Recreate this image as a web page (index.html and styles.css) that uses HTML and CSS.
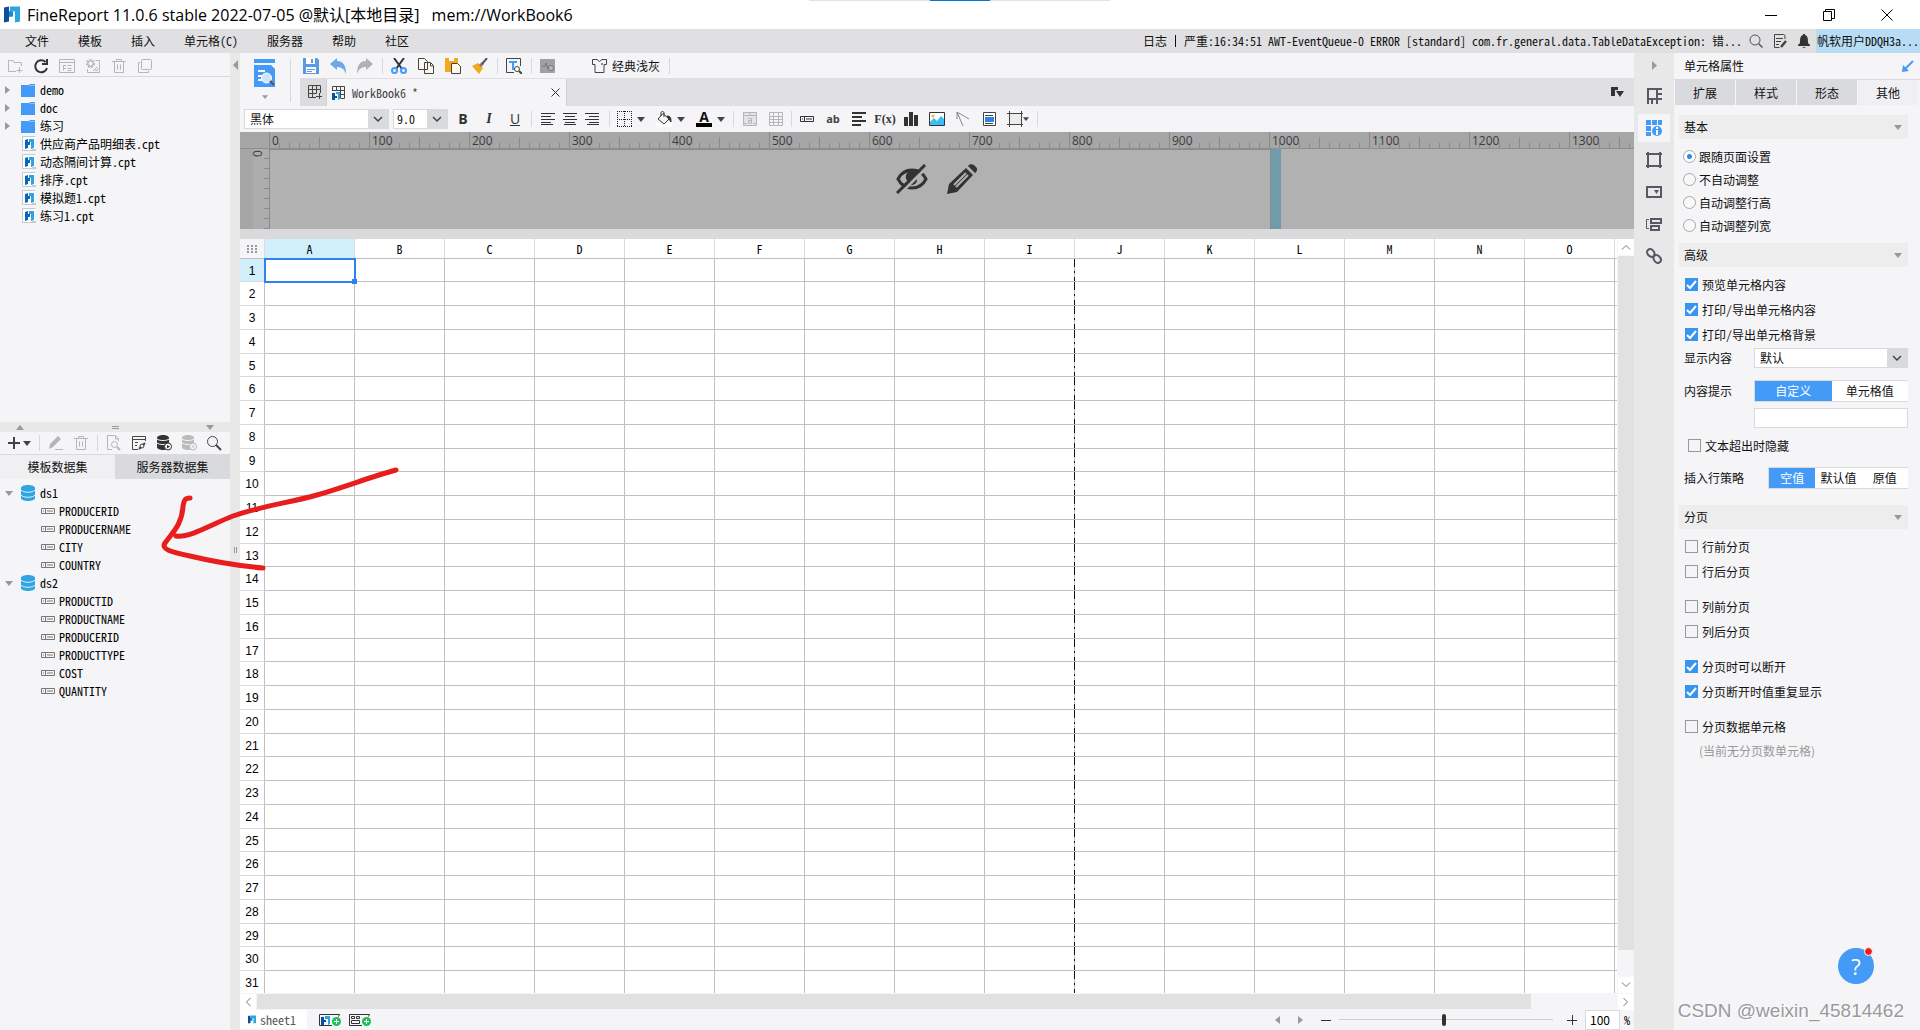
FILE: index.html
```html
<!DOCTYPE html>
<html lang="zh-CN">
<head>
<meta charset="utf-8">
<title>FineReport</title>
<link rel="stylesheet" href="styles.css">
</head>
<body>
<svg class="defs" aria-hidden="true">
  <symbol id="logo" viewBox="0 0 16 16"><path fill="#0a4f9e" d="M0 1l5-1v5h3v5H5v5l-5 1z"/><path fill="#2aa5e0" d="M6 0h10v15l-5 1V5H6z"/><path fill="#1a86d0" d="M5 5h4v5H5z"/></symbol>
  <symbol id="folder" viewBox="0 0 14 13"><path fill="#439bf7" d="M0 1h8l1-1h5v13H0z"/><path stroke="#8cc3fb" fill="none" d="M8 2.500l1-1h5"/></symbol>
  <symbol id="cpt" viewBox="0 0 14 16"><path fill="#fff" stroke="#c8c9cc" d="M13 .5H.5v14H13"/><path fill="#0a65bd" d="M3 4l3-1v3h2v3H6v3l-3 1z"/><path fill="#2aa5e0" d="M7 3h5v9l-3 1V6H7z"/><path fill="#c8c9cc" d="M10 13h4v2h-4z"/></symbol>
  <symbol id="db" viewBox="0 0 14 16"><path fill="#2fa5e2" d="M0 3c0-4 14-4 14 0v10c0 4-14 4-14 0z"/><path fill="none" stroke="#e4f3fc" d="M0 5c2 3 12 3 14 0M0 10c2 3 12 3 14 0"/></symbol>
  <symbol id="field" viewBox="0 0 14 6"><path fill="none" stroke="#777" d="M.5 .5h13v5H.5zM4.500 0v6M6 3h6M2 3h1"/></symbol>
  <symbol id="down" viewBox="0 0 8 5"><path fill="currentColor" d="M0 0h8L4 5z"/></symbol>
  <symbol id="right" viewBox="0 0 5 8"><path fill="currentColor" d="M0 0l5 4-5 4z"/></symbol>
  <symbol id="left" viewBox="0 0 5 8"><path fill="currentColor" d="M5 0L0 4l5 4z"/></symbol>
  <symbol id="trash" viewBox="0 0 16 16"><path fill="none" stroke="currentColor" d="M1 3.500h14M5.500 3V1.500h5V3M3.500 4v10.500h9V4M6.500 6.500v5M9.500 6.500v5"/></symbol>
</svg>

<header class="title-bar">
  <svg class="app-logo"><use href="#logo"/></svg>
  <h1>FineReport 11.0.6 stable 2022-07-05 @默认[本地目录]<span class="book-path">mem://WorkBook6</span></h1>
  <div class="window-buttons">
    <button aria-label="最小化"><svg width="12" height="12"><path d="M0 6.500h12"/></svg></button>
    <button aria-label="还原"><svg width="12" height="12"><path d="M.5 2.500h8v9h-8zM2.500 2V.5h9v9H9"/></svg></button>
    <button aria-label="关闭"><svg width="12" height="12"><path d="M.5 .5l11 11M11.500 .5l-11 11"/></svg></button>
  </div>
  <div class="pull-bar"><span></span></div>
</header>

<nav class="menu-bar">
  <div class="menus">
    <button>文件</button><button>模板</button><button>插入</button><button>单元格<span class="m">(C)</span></button><button>服务器</button><button>帮助</button><button>社区</button>
  </div>
  <div class="log"><span>日志</span><i></i><span>严重<span class="m">:16:34:51 AWT-EventQueue-0 ERROR [standard] com.fr.general.data.TableDataException: </span>错<span class="m">...</span></span></div>
  <div class="menu-icons">
    <button aria-label="搜索"><svg width="14" height="14" fill="none" stroke="#555"><circle cx="6" cy="6" r="5"/><path d="M9.500 9.500l4 4" stroke-width="1.500"/></svg></button>
    <button aria-label="编辑"><svg width="14" height="14" fill="none" stroke="#444"><path d="M12 5V1.500L10.500 .5h-9v13h5M3 4.500h7M3 7.500h5M3 10.500h3" /><path d="M8 13l5-6" stroke-width="2.500"/></svg></button>
    <button aria-label="通知"><svg width="14" height="14"><path fill="#333" d="M6 0h2v1c3 1 3 4 3 8l2 2v1H1v-1l2-2c0-4 0-7 3-8zM5 13h4l-2 1z"/></svg></button>
  </div>
  <button class="user">帆软用户<span class="m">DDQH3a...</span></button>
</nav>

<main class="workspace">
  <aside class="left-panel">
    <div class="toolbar tree-tools">
      <button aria-label="新建文件夹" class="dim"><svg><path d="M9 13.500H1.500v-11H6l1 2h7.500V8M12.500 9v6M9.500 12.500h6"/></svg></button>
      <button aria-label="刷新"><svg><path stroke="#333" stroke-width="2" d="M12.500 4a6 6 0 1 0 1.500 6M14 1v5H9"/></svg></button>
      <button aria-label="查看" class="dim"><svg><path d="M.5 1.500h15v13H.5zM.5 4.500h15M4.500 7v5.500M4.500 7.500H7M4.500 10.500H7M8.500 7.500h4M8.500 10.500h4M8.500 12.500h4"/></svg></button>
      <button aria-label="设置" class="dim"><svg><circle cx="5.500" cy="5.500" r="2.500"/><path stroke-dasharray="2 1" stroke-width="2" d="M9 5.500a3.500 3.500 0 1 1-7 0 3.500 3.500 0 1 1 7 0"/><path d="M10.500 2.500h4v12h-12V11M8 13l4-4M12.500 10v2.500H10"/></svg></button>
      <button aria-label="删除" class="dim"><svg><use href="#trash"/></svg></button>
      <button aria-label="复制" class="dim"><svg><rect x="4.500" y="1.500" width="10" height="10" rx="1"/><path d="M3 4.500H1.500v10h10V13"/></svg></button>
    </div>
    <ul class="tree files">
      <li><svg class="tw r"><use href="#right"/></svg><svg class="ti"><use href="#folder"/></svg><span class="m">demo</span></li>
      <li><svg class="tw r"><use href="#right"/></svg><svg class="ti"><use href="#folder"/></svg><span class="m">doc</span></li>
      <li><svg class="tw r"><use href="#right"/></svg><svg class="ti"><use href="#folder"/></svg>练习</li>
      <li><svg class="ti leaf"><use href="#cpt"/></svg>供应商产品明细表<span class="m">.cpt</span></li>
      <li><svg class="ti leaf"><use href="#cpt"/></svg>动态隔间计算<span class="m">.cpt</span></li>
      <li><svg class="ti leaf"><use href="#cpt"/></svg>排序<span class="m">.cpt</span></li>
      <li><svg class="ti leaf"><use href="#cpt"/></svg>模拟题<span class="m">1.cpt</span></li>
      <li><svg class="ti leaf"><use href="#cpt"/></svg>练习<span class="m">1.cpt</span></li>
    </ul>
    <div class="h-split"><svg class="up" width="8" height="5"><path fill="#999" d="M0 5h8L4 0z"/></svg><i></i><svg class="dn" width="8" height="5"><use href="#down"/></svg></div>
    <div class="toolbar data-tools">
      <button class="add" aria-label="添加"><svg width="12" height="12"><path stroke="#444" stroke-width="2" d="M6 0v12M0 6h12"/></svg><svg class="caret"><use href="#down"/></svg></button>
      <i class="sep"></i>
      <button aria-label="编辑" class="dim"><svg><path fill="currentColor" stroke="none" d="M1 14l1-5 8-8 3 3-8 8zM7 14h8v1H7z"/></svg></button>
      <button aria-label="删除" class="dim"><svg><use href="#trash"/></svg></button>
      <i class="sep"></i>
      <button aria-label="预览" class="dim"><svg><path d="M6 14.500H1.500V.5h8l3 3V6M9.500 1v3h3"/><circle cx="8.500" cy="9.500" r="3"/><path d="M11 12l3 3" stroke-width="2"/></svg></button>
      <button aria-label="关联"><svg stroke="#444"><path d="M14.500 6V1.500h-13v13H7M1 4.500h13M4 7.500h3M4 10.500h2" /><path stroke-width="2" d="M8 14l2-2M14 8l-2 2"/><circle cx="11" cy="11" r="2"/></svg></button>
      <button aria-label="连接"><svg><path fill="#333" stroke="none" d="M1 3c0-4 12-4 12 0v9c0 4-12 4-12 0z"/><path stroke="#f5f5f7" d="M1 4c2 2 10 2 12 0M1 8c2 2 10 2 12 0"/><circle cx="12" cy="11.500" r="3.500" fill="#f5f5f7" stroke="#333"/><path fill="#333" stroke="none" d="M11 10l3 1.500-3 2z"/></svg></button>
      <button aria-label="断开" class="dim"><svg><path fill="#bbb" stroke="none" d="M1 3c0-4 12-4 12 0v9c0 4-12 4-12 0z"/><path stroke="#f5f5f7" d="M1 4c2 2 10 2 12 0M1 8c2 2 10 2 12 0"/><circle cx="12" cy="11.500" r="3.500" fill="#f5f5f7"/><path d="M11 10.500l2 2M13 10.500l-2 2"/></svg></button>
      <button aria-label="搜索"><svg stroke="#444"><circle cx="6.500" cy="6.500" r="5"/><path stroke-width="2" d="M10 10l5 5"/></svg></button>
    </div>
    <div class="data-tabs"><button class="on">模板数据集</button><button>服务器数据集</button></div>
    <ul class="tree data">
      <li class="ds"><svg class="tw d"><use href="#down"/></svg><svg class="ti db"><use href="#db"/></svg><span class="m">ds1</span></li>
      <li class="f"><svg><use href="#field"/></svg><span class="m">PRODUCERID</span></li>
      <li class="f"><svg><use href="#field"/></svg><span class="m">PRODUCERNAME</span></li>
      <li class="f"><svg><use href="#field"/></svg><span class="m">CITY</span></li>
      <li class="f"><svg><use href="#field"/></svg><span class="m">COUNTRY</span></li>
      <li class="ds"><svg class="tw d"><use href="#down"/></svg><svg class="ti db"><use href="#db"/></svg><span class="m">ds2</span></li>
      <li class="f"><svg><use href="#field"/></svg><span class="m">PRODUCTID</span></li>
      <li class="f"><svg><use href="#field"/></svg><span class="m">PRODUCTNAME</span></li>
      <li class="f"><svg><use href="#field"/></svg><span class="m">PRODUCERID</span></li>
      <li class="f"><svg><use href="#field"/></svg><span class="m">PRODUCTTYPE</span></li>
      <li class="f"><svg><use href="#field"/></svg><span class="m">COST</span></li>
      <li class="f"><svg><use href="#field"/></svg><span class="m">QUANTITY</span></li>
    </ul>
  </aside>

  <div class="v-split"><svg width="5" height="10" viewBox="0 0 5 8" preserveAspectRatio="none"><use href="#left"/></svg><i></i></div>

  <section class="center">
    <div class="top">
      <button class="preview" aria-label="预览">
        <svg width="22" height="28"><path fill="#439bf7" d="M0 0h21v4H0zM0 6h17l4 4v18H0z"/><path stroke="#fff" stroke-width="2" d="M4 12h7M4 17h4M4 21h4"/><circle cx="12.500" cy="19" r="5" fill="#cfe5fb" stroke="#fff"/><path stroke="#555" stroke-width="2" d="M16 22l4 4"/></svg>
        <svg class="caret"><use href="#down"/></svg>
      </button>
      <div class="top-right">
        <div class="toolbar main-tools">
          <button aria-label="保存"><svg stroke="none"><path fill="#5a9ae0" d="M0 0h14l2 2v14H0z"/><path fill="#fff" d="M3 0h9v6H3zM3 9h10v6H3z"/><path fill="#5a9ae0" d="M8 1h2v4H8zM4 11h8v1H4zM4 13h5v1H4z"/></svg></button>
          <button aria-label="撤销"><svg stroke="none"><path fill="#6ea8ea" d="M0 6l7-6v3c6 0 9 4 9 13-2-5-4-7-9-7v3z"/></svg></button>
          <button aria-label="重做"><svg stroke="none"><path fill="#b0b1b4" d="M16 6L9 0v3C3 3 0 7 0 16c2-5 4-7 9-7v3z"/></svg></button>
          <i class="sep"></i>
          <button aria-label="剪切"><svg><path stroke="#333" stroke-width="2" d="M3 0l8 11M13 0L5 11"/><circle cx="3.500" cy="12.500" r="2.500" stroke="#439bf7" stroke-width="2"/><circle cx="12.500" cy="12.500" r="2.500" stroke="#439bf7" stroke-width="2"/></svg></button>
          <button aria-label="复制"><svg stroke="#444"><path fill="#fff8ea" d="M.5 .5h6l3 3v8h-9zM6.500 4.500h6l3 3v8h-9z"/><path d="M12.500 5v3h3"/></svg></button>
          <button aria-label="粘贴"><svg stroke="none"><path fill="#f5a81c" d="M0 0h13v5H6v9H0z"/><path fill="#fff" d="M4 0h5v3H4z"/><path fill="#fff8ea" stroke="#444" d="M6.500 5.500h6l3 3v7h-9z"/></svg></button>
          <button aria-label="格式刷"><svg stroke="none"><path fill="#f5a81c" d="M0 8l6-3 5 5-4 6z"/><path stroke="#777" stroke-width="3" d="M8 8l3-3"/><path stroke="#555" stroke-width="2" d="M10 6l5-6"/></svg></button>
          <i class="sep"></i>
          <button aria-label="查找"><svg stroke="#444"><path d="M8 14.500H.5V.5h14V8"/><path stroke="#439bf7" stroke-width="2" d="M3 4h8M7 4v8"/><circle cx="11" cy="11" r="2.500" fill="#fff"/><path stroke-width="2" d="M13 13l3 3"/></svg></button>
          <i class="sep"></i>
          <button aria-label="监控"><svg stroke="none"><path fill="#a0a1a3" d="M0 1h15v14H0z"/><path stroke="#77787a" fill="none" d="M2 8h3l1-3 2 6 1-3"/><circle cx="11" cy="10" r="2.500" stroke="#77787a" fill="#bbb"/></svg></button>
          <button class="theme"><svg stroke="#444"><path d="M1 1.500h4l2.500 2 2.500-2h4.500v5H12v8H3V6.500H.5v-5z"/><path fill="#439bf7" stroke="none" d="M9 5h2v2H9z"/></svg>经典浅灰</button>
          <i class="sep"></i>
        </div>
        <div class="book-tabs">
          <button class="new-tab" aria-label="新建模板"><svg width="15" height="15"><path stroke="#444" fill="none" d="M8 12.500H.5V.5h12V8M.5 4.500h12M.5 8.500h8M4.500 .5v12M8.500 .5v8M11.500 8v6M8 11.500h6"/></svg></button>
          <div class="book-tab"><svg width="14" height="14"><path stroke="#444" fill="none" d="M.5 5V.5h12v12H9M.5 4.500h12M9 8.500h4M4.500 .5v4M8.500 .5v12"/><path fill="#f5f5f7" d="M0 6h8v8H0z"/><path fill="#0a4f9e" d="M0 7h3v3h2v2H3v2H0z"/><path fill="#2aa5e0" d="M4 6h4v7l-2 1V8H4z"/></svg><span class="m">WorkBook6 *</span><button aria-label="关闭标签"><svg width="9" height="9"><path stroke="#333" d="M.5 .5l8 8M8.500 .5l-8 8"/></svg></button></div>
          <button class="tab-list" aria-label="标签列表"><svg width="13" height="11"><path fill="#333" d="M0 0h7v3H4v6H0zM5 4h8L9 10z"/></svg></button>
        </div>
      </div>
    </div>

    <div class="toolbar format">
      <select class="font-name" aria-label="字体"><option>黑体</option></select>
      <select class="font-size m" aria-label="字号"><option>9.0</option></select>
      <div class="letters"><button><b>B</b></button><button><em>I</em></button><button><u>U</u></button></div>
      <i class="sep"></i>
      <div class="grp aligns">
        <button aria-label="左对齐"><svg stroke="#333"><path d="M1 2.500h14M1 5.500h10M1 8.500h14M1 11.500h10M1 13.500h12"/></svg></button>
        <button aria-label="居中"><svg stroke="#333"><path d="M1 2.500h14M3 5.500h10M1 8.500h14M3 11.500h10M2 13.500h12"/></svg></button>
        <button aria-label="右对齐"><svg stroke="#333"><path d="M1 2.500h14M5 5.500h10M1 8.500h14M5 11.500h10M3 13.500h12"/></svg></button>
      </div>
      <i class="sep"></i>
      <div class="grp drops">
        <button aria-label="边框"><svg stroke="#222" stroke-dasharray="1 1"><path d="M1 .5h15M1 15.500h15M1.500 0v16M15.500 0v16M1 8.500h15M8.500 0v16"/></svg><svg class="caret"><use href="#down"/></svg></button>
        <button aria-label="填充"><svg stroke="#333"><path fill="#fff" stroke="none" d="M0 12h16v4H0z"/><path d="M7 2.500L13 8l-5 5-6-5z"/><path d="M5 5V2c0-2 3-2 3 0v4"/><path fill="#333" d="M11 5c3 0 4 1 4 6l-2-3z"/></svg><svg class="caret"><use href="#down"/></svg></button>
        <button aria-label="字体颜色" class="fc"><span class="fc-box"><b>A</b></span><svg class="caret"><use href="#down"/></svg></button>
      </div>
      <i class="sep"></i>
      <div class="grp cells">
        <button aria-label="合并" class="dim"><svg><path fill="#e4e4e6" d="M1.500 1.500h13v13h-13z"/><path d="M1 4.500h14M8 1v3M6 7.500h3.500v5M9 9.500H6.500v2.500H9M2 12.500h3M11 12.500h4"/></svg></button>
        <button aria-label="拆分" class="dim"><svg><path d="M1.500 1.500h13v13h-13zM1 5.500h14M1 8.500h14M1 11.500h14M5.500 1v14M10.500 1v14"/></svg></button>
      </div>
      <i class="sep"></i>
      <div class="grp inserts">
        <button aria-label="数据列"><svg stroke="#333"><path d="M1.500 5.500h13v5h-13zM5.500 5v6M7 8h6M3 8h1"/></svg></button>
        <button class="ab">ab</button>
        <button aria-label="富文本"><svg stroke="#333" stroke-width="2"><path d="M1 2h14M1 6h10M1 10h14M1 14h9"/></svg></button>
        <button class="fx">F(x)</button>
        <button aria-label="图表"><svg stroke="none"><path fill="#333" d="M1 6h4v9H1zM6 1h4v14H6zM11 4h4v11h-4z"/></svg></button>
        <button aria-label="图片"><svg><path fill="#fff" stroke="#333" d="M.5 1.500h15v13H.5z"/><circle cx="4" cy="5" r="1.500" fill="#f7b733" stroke="none"/><path fill="#3bbdf5" stroke="none" d="M1 11l4-4 3 3 4-5 3 3v6H1z"/></svg></button>
        <button aria-label="斜线"><svg stroke="#888"><path d="M2 1l12 7M2 1l6 14M2 1v7"/></svg></button>
        <button aria-label="子报表"><svg stroke="#444"><path fill="#fff" d="M2.500 1.500h12v13h-12z"/><path d="M4 4.500h8M4 12.500h8"/><path fill="#2e87df" stroke="none" d="M4 6h9v5H4z"/></svg></button>
        <button aria-label="悬浮元素"><svg stroke="#444"><path fill="#ececee" d="M2.500 2.500h12v11h-12z"/><path d="M0 2.500h16M0 13.500h16M2.500 0v16M14.500 0v16"/></svg></button>
      </div>
      <svg class="caret small"><use href="#down"/></svg>
      <i class="sep"></i>
    </div>

    <div class="canvas">
      <div class="ruler-x"><span class="zero"></span></div>
      <div class="canvas-body">
        <div class="ruler-y"><span>0</span></div>
        <div class="form-page">
          <svg width="32" height="30" viewBox="0 0 32 30"><path fill="none" stroke="#333" stroke-width="3" d="M2 15c6-12 22-12 28 0-6 12-22 12-28 0z"/><path fill="#333" d="M3 13C8 5 20 4 24 7L10 22l-5-3c3 1 5 1 7-1-3-3-3-7 0-10z"/><path fill="#333" d="M20 13c3 4-1 9-6 8z"/><path stroke="#b1b1b1" stroke-width="3" d="M4 30L31 3"/><path stroke="#333" stroke-width="3" d="M1 29L29 1"/></svg>
          <svg width="30" height="30" viewBox="0 0 30 30"><path fill="#333" d="M0 30l2-10L19 4l7 7L10 28zM21 2c2-3 6-2 8 1 2 2 1 5-1 6z"/><path stroke="#b1b1b1" stroke-width="2" d="M7 21L19 9M9 23L21 11"/></svg>
        </div>
        <div class="edge"></div>
      </div>
    </div>

    <div class="sheet">
      <div class="grid-clip"><table class="grid"></table></div>
      <div class="scroll-y"><button aria-label="向上"><svg width="10" height="6"><path d="M1 5.500l4-4 4 4"/></svg></button><i></i><button aria-label="向下"><svg width="10" height="6"><path d="M1 .5l4 4 4-4"/></svg></button></div>
    </div>
    <div class="scroll-x"><button aria-label="向左"><svg width="6" height="10"><path d="M5.500 1l-4 4 4 4"/></svg></button><i></i><button aria-label="向右"><svg width="6" height="10"><path d="M.5 1l4 4-4 4"/></svg></button></div>

    <footer class="status">
      <button class="sheet-tab"><svg width="8" height="9"><use href="#logo"/></svg><span class="m">sheet1</span></button>
      <button class="add-sheet" aria-label="新增报表"><svg width="23" height="14"><path fill="none" stroke="#333" d="M13 12.500H.5V1.500h20l-1 2"/><path fill="#0a4f9e" d="M2 4h3v3h2v2H5v3H2z"/><path fill="#2aa5e0" d="M6 3h5v8l-2 1V6H6z"/><circle cx="17.500" cy="8.500" r="4.500" fill="#21bf5b"/><path stroke="#fff" d="M15 8.500h5M17.500 6v5"/></svg></button>
      <button class="add-sheet" aria-label="新增决策报表"><svg width="23" height="14"><path fill="none" stroke="#333" d="M13 12.500H.5V1.500h20l-1 2M2.500 3.500h3v2h-3zM7.500 3.500h3v2h-3zM2.500 7.500h8v3h-8z"/><circle cx="17.500" cy="8.500" r="4.500" fill="#21bf5b"/><path stroke="#fff" d="M15 8.500h5M17.500 6v5"/></svg></button>
      <div class="zoom">
        <svg width="5" height="8"><use href="#left"/></svg>
        <svg width="5" height="8"><use href="#right"/></svg>
        <button aria-label="缩小"><svg width="10" height="10"><path stroke="#333" d="M0 5.500h10"/></svg></button>
        <input type="range" min="0" max="100" value="49" aria-label="缩放">
        <button aria-label="放大"><svg width="10" height="10"><path stroke="#333" d="M0 5.500h10M5.500 0v10"/></svg></button>
        <label><input type="text" value="100"><span class="m">%</span></label>
      </div>
    </footer>
  </section>

  <nav class="rail">
    <button class="fold" aria-label="折叠"><svg width="5" height="9" viewBox="0 0 5 8" preserveAspectRatio="none"><use href="#right"/></svg></button>
    <button aria-label="单元格元素"><svg><path d="M1 1h15M2 1v15M2 11h9M11 1v15M11 6h5M11 11h5M6 11v5"/></svg></button>
    <button class="on" aria-label="单元格属性"><svg stroke="none"><path fill="#439bf7" d="M0 0h5v5H0zM6 0h5v5H6zM12 0h4v5h-4zM0 6h5v5H0zM0 12h5v4H0z"/><circle cx="11" cy="11" r="5" fill="#439bf7"/><path fill="#fff" d="M10 7h2v2h-2zM10 10h2v5h-2z"/></svg></button>
    <button aria-label="悬浮元素"><svg><path d="M2 0v16M14 0v16M0 2h16M0 14h16"/></svg></button>
    <button aria-label="控件设置"><svg><path d="M1 3h14v10H1z"/><path fill="#555962" stroke="none" d="M8 6h5l-2.500 4z"/></svg></button>
    <button aria-label="条件属性"><svg><path d="M5 3h10v4H5zM5 10h8v4H5z"/><path stroke-width="1" d="M3 3.500H.5v9H3"/></svg></button>
    <button aria-label="超级链接"><svg><path d="M9 8C4 11-1 5 2 2s8 2 6 6M7 8c5-3 10 3 7 6s-8-2-6-6"/></svg></button>
  </nav>

  <aside class="props">
    <header><h2>单元格属性</h2><svg width="12" height="12"><path stroke="#439bf7" stroke-width="2" d="M11 1L3 9"/><path fill="#439bf7" d="M0 12l1-7 6 6z"/></svg></header>
    <div class="prop-tabs"><button>扩展</button><button>样式</button><button>形态</button><button class="on">其他</button></div>
    <div class="prop-body">
      <h3>基本<svg class="caret"><use href="#down"/></svg></h3>
      <div class="radios">
        <label><input type="radio" name="fit" checked>跟随页面设置</label>
        <label><input type="radio" name="fit">不自动调整</label>
        <label><input type="radio" name="fit">自动调整行高</label>
        <label><input type="radio" name="fit">自动调整列宽</label>
      </div>
      <h3>高级<svg class="caret"><use href="#down"/></svg></h3>
      <div class="checks">
        <label><input type="checkbox" checked>预览单元格内容</label>
        <label><input type="checkbox" checked><span>打印<span class="m">/</span>导出单元格内容</span></label>
        <label><input type="checkbox" checked><span>打印<span class="m">/</span>导出单元格背景</span></label>
      </div>
      <div class="row"><label for="show">显示内容</label><select id="show"><option>默认</option></select></div>
      <div class="row tip"><span>内容提示</span><div class="seg two"><button class="on">自定义</button><button>单元格值</button></div></div>
      <input class="tip-text" type="text" aria-label="内容提示">
      <div class="checks inset"><label><input type="checkbox">文本超出时隐藏</label></div>
      <div class="row insert"><span>插入行策略</span><div class="seg three"><button class="on">空值</button><button>默认值</button><button>原值</button></div></div>
      <h3>分页<svg class="caret"><use href="#down"/></svg></h3>
      <div class="checks">
        <label><input type="checkbox">行前分页</label>
        <label><input type="checkbox">行后分页</label>
      </div>
      <div class="checks later">
        <label><input type="checkbox">列前分页</label>
        <label><input type="checkbox">列后分页</label>
      </div>
      <div class="checks later">
        <label><input type="checkbox" checked>分页时可以断开</label>
        <label><input type="checkbox" checked>分页断开时值重复显示</label>
      </div>
      <div class="checks later">
        <label><input type="checkbox">分页数据单元格</label>
        <p>(当前无分页数单元格)</p>
      </div>
    </div>
  </aside>
</main>

<svg class="marker" width="280" height="120" viewBox="150 460 280 120"><path d="M396 470C370 477 345 487 317 495S265 505 233 516C212 524 190 538 176 536M190 498C185 498 184 500 183 506C182 525 172 533 165 543C161 549 170 552 190 556C215 562 240 566 263 568"/></svg>
<button class="help">?<i></i></button>
<div class="watermark">CSDN @weixin_45814462</div>
<script src="script.js"></script>
</body>
</html>
```
FILE: styles.css
```css
* { box-sizing: border-box; }
body {
  margin: 0;
  height: 100vh;
  display: flex;
  flex-direction: column;
  overflow: hidden;
  background: #f5f5f7;
  color: #111;
  font: 12px/16px "Noto Sans CJK SC", sans-serif;
}
.m { font-family: "Noto Sans Mono CJK SC", "Liberation Mono", monospace; white-space: pre; }
button, input, select { font: inherit; color: inherit; margin: 0; padding: 0; border: 0; background: none; }
h1, h2, h3, ul, p { margin: 0; padding: 0; font-weight: normal; font-size: inherit; list-style: none; }
svg { display: block; flex: none; }
.defs { width: 0; height: 0; position: absolute; }
.sep { width: 1px; height: 16px; background: #d8d8db; flex: none; }
.toolbar { display: flex; align-items: center; }
.toolbar button { display: flex; align-items: center; justify-content: center; flex: none; }
.toolbar button > svg { width: 16px; height: 16px; fill: none; }
.toolbar svg:not([stroke]) { stroke: currentColor; }
.dim { color: #b5b6b9; }
svg.caret, .toolbar button > svg.caret { width: 8px; height: 5px; color: #444; stroke: none; }

/* title and menus */
.title-bar { flex: none; height: 29px; background: #fff; display: flex; align-items: center; padding: 0 4px; position: relative; color: #000; }
.app-logo { width: 16px; height: 17px; }
.title-bar h1 { font: 16px/24px "Open Sans", "Noto Sans CJK SC", sans-serif; margin-left: 7px; flex: 1; }
.book-path { margin-left: 12px; }
.window-buttons { display: flex; }
.window-buttons button { width: 58px; height: 28px; display: grid; place-items: center; }
.window-buttons svg { fill: none; stroke: #000; }
.pull-bar { position: absolute; top: 0; left: 809px; width: 301px; height: 1px; background: #e2e2e2; display: flex; justify-content: center; }
.pull-bar span { width: 60px; background: #0078d7; }
.menu-bar { flex: none; height: 24px; background: #e0e0e2; display: flex; align-items: center; }
.menus { display: flex; gap: 29px; padding-left: 25px; flex: 1; }
.log { display: flex; align-items: center; gap: 8px; white-space: nowrap; }
.log i { width: 1px; height: 12px; background: #111; }
.menu-icons { display: flex; gap: 10px; padding: 0 5px 0 7px; }
.user { width: 104px; height: 24px; background: #b8dcf3; white-space: nowrap; }

.workspace { flex: 1; min-height: 0; display: flex; }

/* left panel */
.left-panel { width: 230px; display: flex; flex-direction: column; flex: none; }
.tree-tools { height: 24px; flex: none; gap: 10px; padding: 2px 0 0 7px; border-bottom: 1px solid #dadadc; }
.tree li { height: 18px; display: flex; align-items: center; padding-left: 5px; color: #000; }
.tree .tw { width: 5px; height: 8px; color: #999; margin-right: 11px; }
.tree .ti { width: 14px; height: 13px; margin-right: 5px; }
.tree .ti.leaf { height: 16px; margin-left: 17px; margin-right: 4px; }
.files { height: 345px; padding-top: 4px; }
.data { padding-top: 5px; flex: 1; }
.tree .tw.d { width: 8px; height: 5px; margin-right: 8px; }
.tree .ti.db { height: 16px; margin-right: 5px; }
.tree .f { padding-left: 41px; gap: 4px; }
.tree .f svg { width: 14px; height: 6px; }
.h-split { flex: none; height: 10px; background: #e8e8e9; display: flex; align-items: center; justify-content: space-between; padding: 0 16px; color: #999; }
.h-split i { width: 7px; height: 3px; border: solid #999; border-width: 1px 0; }
.data-tools { flex: none; height: 23px; gap: 9px; padding-left: 8px; border-bottom: 1px solid #dadadc; }
.data-tools .add { gap: 3px; width: 23px; }
.toolbar.data-tools .add svg:first-child { width: 12px; height: 12px; }
.data-tools .sep { margin: 0 -1px; }
.data-tabs { flex: none; height: 24px; display: flex; }
.data-tabs button { flex: 1; background: #d9dadd; }
.data-tabs .on { background: #f0f0f2; }
.v-split { width: 10px; flex: none; background: #e8e8e9; display: flex; flex-direction: column; align-items: center; padding-top: 7px; color: #999; }
.v-split i { width: 3px; height: 6px; border: solid #999; border-width: 0 1px; margin: auto; }

/* centre: toolbars */
.center { flex: 1; min-width: 0; display: flex; flex-direction: column; }
.top { display: flex; height: 53px; flex: none; }
.preview { width: 51px; margin: 6px 9px 4px 0; border-right: 1px solid #d8d8db; display: flex; flex-direction: column; align-items: center; gap: 8px; }
.preview svg.caret { width: 6px; height: 4px; color: #999; }
.top-right { flex: 1; }
.main-tools { height: 25px; padding-left: 3px; }
.main-tools button { margin-right: 11px; }
.main-tools .sep { margin: 0 8px 0 -2px; }
.main-tools .theme { margin: 0 11px 0 25px; gap: 4px; }
.book-tabs { height: 28px; background: #e0e0e2; display: flex; align-items: center; }
.new-tab { width: 26px; height: 28px; padding-left: 4px; display: grid; place-items: center; background: #dcdcde; }
.book-tab { width: 241px; height: 27px; margin-top: 1px; background: #f5f5f7; border: solid #cfcfd2; border-width: 0 1px; display: flex; align-items: center; padding: 0 6px 0 5px; gap: 6px; color: #444; }
.book-tab button { margin-left: auto; }
.tab-list { margin: 0 10px 0 auto; }
.format { height: 26px; flex: none; padding-left: 4px; }
select { appearance: none; height: 20px; padding-left: 5px; border: 1px solid #d8d9dc; border-radius: 0;
  background: url("data:image/svg+xml,%3Csvg xmlns='http://www.w3.org/2000/svg' width='20' height='20'%3E%3Cpath fill='%23d9dadd' d='M0 0h20v20H0z'/%3E%3Cpath fill='none' stroke='%23444' stroke-width='1.500' d='M6 8l4 4 4-4'/%3E%3C/svg%3E") right center no-repeat #fff; }
.font-name { width: 145px; margin-right: 4px; }
.font-size { width: 55px; padding-left: 3px; }
.letters { display: flex; margin: 0 3px 0 2px; }
.toolbar .letters button { width: 26px; font: 14px/16px "Open Sans", sans-serif; color: #333; }
.letters em { font-family: "Liberation Serif", serif; font-weight: bold; }
.grp { display: flex; }
.aligns { gap: 6px; padding: 0 9px 0 8px; }
.drops { gap: 11px; padding: 0 8px 0 6px; }
.drops button { gap: 5px; }
.drops b { display: block; width: 16px; height: 16px; border-bottom: 4px solid #000; font: bold 14px/12px "Open Sans", sans-serif; }
.cells { gap: 10px; padding: 0 7px 0 8px; }
.inserts { gap: 10px; padding-left: 7px; }
.inserts button { width: 16px; }
.toolbar .ab { font: bold 11px/16px "Open Sans", sans-serif; color: #444; }
.toolbar .fx { font: bold 12px/16px "Liberation Serif", serif; color: #333; }
.toolbar svg.caret.small { width: 6px; height: 4px; margin-right: 8px; stroke: none; }

/* ruler strip */
.canvas { flex: none; height: 107px; background: #b1b1b1; border-bottom: 10px solid #dadadc; display: flex; flex-direction: column; overflow: hidden; }
.ruler-x { height: 17px; flex: none; background: #a6a6a6; border-bottom: 1px solid #8e8e8e; display: flex; overflow: hidden; color: #3c3c3c; font: 12px/17px "Open Sans", sans-serif; }
.ruler-x .zero { width: 29px; flex: none; }
.ruler-x .unit { width: 100px; flex: none; padding-left: 2px; border-left: 1px solid #8a8a8a;
  background:
    linear-gradient(#8a8a8a, #8a8a8a) 49px 5px / 1px 12px no-repeat,
    repeating-linear-gradient(90deg, transparent 0 9px, #8a8a8a 9px 10px) 0 11px / 100% 6px no-repeat; }
.canvas-body { flex: 1; display: flex; }
.ruler-y { width: 29px; flex: none; padding-left: 13px;
  background:
    repeating-linear-gradient(transparent 0 9px, #8a8a8a 9px 10px) right / 5px 100% no-repeat,
    linear-gradient(90deg, #a6a6a6 13px, #adadad 13px); }
.ruler-y span { display: block; width: 10px; height: 8px; color: #3c3c3c; font: 12px/10px "Open Sans", sans-serif; writing-mode: vertical-rl; transform: rotate(180deg); }
.form-page { width: 1002px; flex: none; border: solid #8a8a8a; border-width: 1px 1px 0; display: flex; justify-content: flex-end; gap: 19px; padding: 14px 293px 0 0; }
.edge { width: 10px; background: #6f9ca8; }

/* spreadsheet */
.sheet { flex: 1; min-height: 0; display: flex; }
.grid-clip { flex: 1; min-width: 0; overflow: hidden; background: #fff; }
.grid { table-layout: fixed; width: 100%; border-spacing: 0; color: #000; }
.grid .c0 { width: 25px; }
.grid .c { width: 90px; }
.grid th, .grid td { padding: 0; border: solid #c0c0c0; border-width: 0 1px 1px 0; font-weight: normal; height: 24px; line-height: 16px; }
.grid tbody tr:nth-child(4n+1) > * { height: 23px; }
.grid thead th { height: 20px; border-right-color: #dadadc; }
.grid thead th:first-child { background: #f5f5f7; }
.grid tbody th { font: 12px/16px "Liberation Sans", sans-serif; padding-top: 1px; border-bottom-color: #dadadc; }
.grid tr > :last-child { border-right: 0; }
.grid th.on { background: #d0effb; }
.grid .break { border-right: 0; background: repeating-linear-gradient(#111 0 8px, #c0c0c0 8px 12px, #111 12px 14px, #c0c0c0 14px 18px) right / 1px 100% no-repeat; }
.grid .cur { position: relative; }
.cur i { position: absolute; inset: -1px -2px -2px -1px; border: 2px solid #2f82ee; }
.cur b { position: absolute; right: -3px; bottom: -3px; width: 5px; height: 5px; background: #2f82ee; }
.dots { width: 10px; height: 8px; margin: auto; display: block; fill: #999; }
.scroll-y, .scroll-x { display: flex; flex: none; }
.scroll-y { width: 17px; flex-direction: column; padding-left: 1px; }
.scroll-x { height: 16px; padding-top: 1px; }
.scroll-y button, .scroll-x button { width: 16px; height: 16px; background: #fff; display: grid; place-items: center; flex: none; }
.scroll-y svg, .scroll-x svg { fill: none; stroke: #777; }
.scroll-y i { flex: 1; background: #e1e1e1; margin: 1px 0 27px; }
.scroll-x i { flex: 1; background: #e1e1e1; margin: 0 87px 0 1px; }
.status { flex: none; height: 21px; display: flex; align-items: center; }
.sheet-tab { width: 67px; height: 19px; background: #fff; display: flex; align-items: center; gap: 4px; padding-left: 8px; margin-right: 12px; color: #555; }
.add-sheet { margin-right: 7px; }
.zoom { margin-left: auto; display: flex; align-items: center; color: #999; }
.zoom > svg { margin-right: 18px; }
.zoom > input { appearance: none; width: 214px; height: 14px; margin: 0 14px 0 8px; background: linear-gradient(#ccc, #ccc) center / 100% 1px no-repeat; }
.zoom > input::-webkit-slider-thumb { appearance: none; width: 4px; height: 12px; border-radius: 2px; background: #333; }
.zoom label { display: flex; align-items: center; gap: 4px; margin-left: 8px; padding-right: 4px; color: #000; }
.zoom label input { width: 35px; height: 20px; padding-left: 4px; border: 1px solid #d8d9dc; background: #fff; }

/* right side */
.rail { width: 40px; flex: none; background: #e8e8e9; display: flex; flex-direction: column; align-items: center; gap: 4px; }
.rail button { width: 32px; height: 28px; display: grid; place-items: center; }
.rail .fold { height: 25px; color: #999; }
.rail .on { background: #f5f5f7; }
.rail button:not(.fold) svg { width: 16px; height: 16px; }
.rail svg:not([stroke]) { fill: none; stroke: #555962; stroke-width: 2; }
.rail .fold svg:not([stroke]) { stroke: none; }
.props { width: 246px; flex: none; }
.props header { height: 27px; padding: 0 6px 0 10px; display: flex; align-items: center; justify-content: space-between; border-bottom: 1px solid #dadadc; }
.prop-tabs { display: flex; gap: 1px; padding: 0 2px 0 1px; height: 25px; }
.prop-tabs button { flex: 1; background: #d9dadd; }
.prop-tabs .on { background: #f0f0f2; }
.prop-body { padding: 10px 12px 0 5px; }
.prop-body h3 { height: 24px; padding: 0 6px 0 5px; background: #ededee; display: flex; align-items: center; justify-content: space-between; }
.prop-body h3 .caret { color: #999; }
.radios, .checks { display: flex; flex-direction: column; }
.radios { padding: 6px 0 6px 4px; }
.radios label { height: 23px; display: flex; align-items: center; gap: 3px; }
.checks { padding: 5px 0 0 6px; }
.checks label { height: 25px; display: flex; align-items: center; gap: 4px; }
input[type=radio] { appearance: none; width: 13px; height: 13px; border: 1px solid #a8a8a8; border-radius: 50%; background: #f8f8f8; }
input[type=radio]:checked { background: radial-gradient(#2f87ef 0 2px, #fff 3px); }
input[type=checkbox] { appearance: none; width: 13px; height: 13px; border: 1px solid #999; }
input[type=checkbox]:checked { border: 0; background: url("data:image/svg+xml,%3Csvg xmlns='http://www.w3.org/2000/svg' width='13' height='13'%3E%3Cpath fill='none' stroke='%23fff' stroke-width='2' d='M2 7l3 3 6-7'/%3E%3C/svg%3E") #3795f0; }
.row { display: flex; align-items: center; justify-content: space-between; padding-left: 5px; margin-top: 1px; }
.row select { width: 154px; }
.row.tip { margin-top: 12px; }
.seg { display: grid; height: 22px; border: 1px solid #dadadc; border-right: 0; background: #fff; }
.seg .on { background: #439bf7; color: #fff; }
.two { width: 154px; grid-template-columns: 1fr 1fr; }
.three { width: 140px; grid-template-columns: 1fr 1fr 1fr; }
.tip-text { display: block; width: 154px; height: 20px; margin: 6px 0 0 auto; background: #fff; border: 1px solid #dadadc; }
.checks.inset { padding-left: 9px; }
.row.insert { margin: 9px 0 16px; }
.checks.later { padding-top: 10px; }
.checks p { padding: 4px 0 0 14px; color: #999; }

/* overlays */
.marker { position: absolute; left: 150px; top: 460px; pointer-events: none; }
.marker path { fill: none; stroke: #e81e1e; stroke-width: 5; stroke-linecap: round; stroke-linejoin: round; }
.help { position: absolute; right: 46px; bottom: 46px; width: 36px; height: 36px; border-radius: 50%; background: #439bf7; color: #fff; font: 22px/36px "Open Sans", sans-serif; }
.help i { position: absolute; right: 1px; top: -1px; width: 9px; height: 9px; border-radius: 50%; background: #ee1f1f; border: 1px solid #fff; }
.watermark { position: absolute; right: 16px; bottom: 7px; color: #9a9a9c; font: 19px/24px "Liberation Sans", sans-serif; text-shadow: 1px 1px 0 #fff; }
```
FILE: script.js
```js
// ruler: one labelled unit per 100 px
const ruler = document.querySelector('.ruler-x');
for (let n = 0; n <= 1300; n += 100) {
  const unit = document.createElement('span');
  unit.className = 'unit';
  unit.textContent = n;
  ruler.append(unit);
}

// spreadsheet: columns A-O, rows 1-31
const cols = [...'ABCDEFGHIJKLMNO'];
const breakAfter = 'I';
const dots = '<svg class="dots"><path d="M0 0h2v2H0zM4 0h2v2H4zM8 0h2v2H8zM0 3h2v2H0zM4 3h2v2H4zM8 3h2v2H8zM0 6h2v2H0zM4 6h2v2H4zM8 6h2v2H8z"/></svg>';
let html = '<colgroup><col class="c0">' + cols.map(() => '<col class="c">').join('') + '<col></colgroup>';
html += '<thead><tr><th>' + dots + '</th>' +
  cols.map(c => `<th class="m${c === 'A' ? ' on' : ''}">${c}</th>`).join('') + '<th></th></tr></thead><tbody>';
for (let r = 1; r <= 31; r++) {
  html += `<tr><th${r === 1 ? ' class="on"' : ''}>${r}</th>` + cols.map(c => {
    if (r === 1 && c === 'A') return '<td class="cur"><i></i><b></b></td>';
    return c === breakAfter ? '<td class="break"></td>' : '<td></td>';
  }).join('') + '<td></td></tr>';
}
document.querySelector('.grid').innerHTML = html + '</tbody>';
```
